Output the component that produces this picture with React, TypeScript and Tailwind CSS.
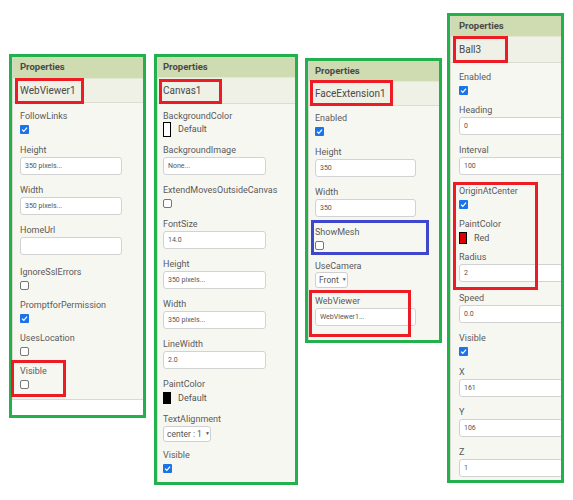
import React from "react";

type Item = {
  label: string;
  kind: "check" | "input" | "swatch" | "select";
  h?: number;
  value?: string;
  checked?: boolean;
  color?: string;
  tall?: boolean;
  selectCls?: string;
};

const H: Record<number, string> = {
  33: "h-[33px]",
  34: "h-[34px]",
  35: "h-[35px]",
  36: "h-[36px]",
  40: "h-[40px]",
  41: "h-[41px]",
  42: "h-[42px]",
};

function Check({ on }: { on?: boolean }) {
  if (on) {
    return (
      <div className="mt-[3px] w-[9px] h-[9px] rounded-[1px] bg-[#1a73e8] flex items-center justify-center">
        <svg width="7" height="7" viewBox="0 0 10 10">
          <path d="M1.5 5.2 L4 7.6 L8.6 2.4" fill="none" stroke="#fff" strokeWidth="1.8" />
        </svg>
      </div>
    );
  }
  return <div className="mt-[3px] w-[9px] h-[9px] rounded-[2px] border border-[#767676] bg-white" />;
}

function Prop({ item, inputCls }: { item: Item; inputCls: string }) {
  return (
    <div className={`flex flex-col items-start ${item.h ? H[item.h] : ""}`}>
      <div className="h-[12px] leading-[12px] text-[9px] text-[#5a5a5a] whitespace-nowrap">{item.label}</div>
      {item.kind === "check" && <Check on={item.checked} />}
      {item.kind === "input" && (
        <div className={`mt-[1px] h-[18px] shrink-0 bg-white border border-[#d2d2d2] rounded-[3px] flex items-center pl-[4px] text-[7px] text-[#555] ${inputCls}`}>
          {item.value}
        </div>
      )}
      {item.kind === "swatch" && (
        <div className={`flex items-center gap-[7px] ${item.tall ? "mt-0 h-[15px]" : "mt-[2px] h-[12px]"}`}>
          <div
            className={`${item.tall ? "w-[8px] h-[15px] border-[1.5px]" : "w-[8px] h-[12px] border"} border-black`}
            style={{ background: item.color }}
          />
          <span className="text-[9px] text-[#555] leading-none">{item.value}</span>
        </div>
      )}
      {item.kind === "select" && (
        <div className={`h-[16px] bg-white border border-[#cfcfcf] rounded-[3px] flex items-center pl-[3px] gap-[3px] text-[8.5px] text-[#555] ${item.selectCls}`}>
          <span>{item.value}</span>
          <span className="text-[5px]">▼</span>
        </div>
      )}
    </div>
  );
}

function Panel({
  name,
  items,
  panelCls,
  headCls,
  nameCls,
  bodyCls,
  inputCls,
}: {
  name: string;
  items: Item[];
  panelCls: string;
  headCls: string;
  nameCls: string;
  bodyCls: string;
  inputCls: string;
}) {
  return (
    <div className={`bg-[#f7f7f2] border-l border-[#d9d9d0] overflow-hidden ${panelCls}`}>
      <div className={`flex items-center bg-[#cfdbb0] border-b border-[#e3e8d2] text-[9.5px] font-bold text-[#4a4a4a] ${headCls}`}>
        Properties
      </div>
      <div className={`flex items-center bg-[#eff0e6] border-b border-[#dcdcd0] text-[10px] text-[#4a4a4a] ${nameCls}`}>
        {name}
      </div>
      <div className={`flex flex-col ${bodyCls}`}>
        {items.map((it) => (
          <Prop key={it.label} item={it} inputCls={inputCls} />
        ))}
      </div>
    </div>
  );
}

const red = "absolute border-[3px] border-[#ed1c24]";

export default function App() {
  const webViewer: Item[] = [
    { label: "FollowLinks", kind: "check", checked: true, h: 34 },
    { label: "Height", kind: "input", value: "350 pixels...", h: 40 },
    { label: "Width", kind: "input", value: "350 pixels...", h: 40 },
    { label: "HomeUrl", kind: "input", value: "", h: 42 },
    { label: "IgnoreSslErrors", kind: "check", h: 33 },
    { label: "PromptforPermission", kind: "check", checked: true, h: 33 },
    { label: "UsesLocation", kind: "check", h: 33 },
    { label: "Visible", kind: "check" },
  ];
  const canvas: Item[] = [
    { label: "BackgroundColor", kind: "swatch", value: "Default", color: "#fff", tall: true, h: 34 },
    { label: "BackgroundImage", kind: "input", value: "None...", h: 40 },
    { label: "ExtendMovesOutsideCanvas", kind: "check", h: 34 },
    { label: "FontSize", kind: "input", value: "14.0", h: 40 },
    { label: "Height", kind: "input", value: "350 pixels...", h: 40 },
    { label: "Width", kind: "input", value: "350 pixels...", h: 40 },
    { label: "LineWidth", kind: "input", value: "2.0", h: 40 },
    { label: "PaintColor", kind: "swatch", value: "Default", color: "#000", h: 35 },
    { label: "TextAlignment", kind: "select", value: "center : 1", selectCls: "w-[48px] mt-[1px]", h: 36 },
    { label: "Visible", kind: "check", checked: true },
  ];
  const face: Item[] = [
    { label: "Enabled", kind: "check", checked: true, h: 34 },
    { label: "Height", kind: "input", value: "350", h: 40 },
    { label: "Width", kind: "input", value: "350", h: 40 },
    { label: "ShowMesh", kind: "check", h: 34 },
    { label: "UseCamera", kind: "select", value: "Front", selectCls: "w-[33px] mt-0", h: 35 },
    { label: "WebViewer", kind: "input", value: "WebViewer1..." },
  ];
  const ball: Item[] = [
    { label: "Enabled", kind: "check", checked: true, h: 33 },
    { label: "Heading", kind: "input", value: "0", h: 40 },
    { label: "Interval", kind: "input", value: "100", h: 41 },
    { label: "OriginAtCenter", kind: "check", checked: true, h: 33 },
    { label: "PaintColor", kind: "swatch", value: "Red", color: "#e00000", h: 33 },
    { label: "Radius", kind: "input", value: "2", h: 41 },
    { label: "Speed", kind: "input", value: "0.0", h: 40 },
    { label: "Visible", kind: "check", checked: true, h: 34 },
    { label: "X", kind: "input", value: "161", h: 40 },
    { label: "Y", kind: "input", value: "106", h: 40 },
    { label: "Z", kind: "input", value: "1" },
  ];

  return (
    <div className="w-[573px] h-[500px] bg-white flex items-start overflow-hidden" style={{ fontFamily: "Roboto, 'Noto Sans', sans-serif" }}>
      {/* WebViewer */}
      <div className="relative shrink-0 w-[137px] h-[364px] mt-[54px] ml-[9px] border-[3px] border-[#22b14c] bg-white">
        <Panel
          name="WebViewer1"
          items={webViewer}
          panelCls="h-[343px] border-b"
          headCls="h-[22px] pl-[7px]"
          nameCls="h-[24px] pl-[7px]"
          bodyCls="pt-[7px] pl-[7px]"
          inputCls="w-[102px]"
        />
        <div className={`${red} left-[3px] top-[21px] w-[69px] h-[26px]`} />
        <div className={`${red} left-[-1px] top-[303px] w-[55px] h-[37px]`} />
      </div>

      {/* Canvas */}
      <div className="relative shrink-0 w-[144px] h-[431px] mt-[54px] ml-[8px] border-[3px] border-[#22b14c] bg-white">
        <Panel
          name="Canvas1"
          items={canvas}
          panelCls="h-full"
          headCls="h-[21px] pl-[5px]"
          nameCls="h-[26px] pl-[5px]"
          bodyCls="pt-[6px] pl-[5px]"
          inputCls="w-[103px]"
        />
        <div className={`${red} left-[2px] top-[22px] w-[63px] h-[25px]`} />
      </div>

      {/* FaceExtension */}
      <div className="relative shrink-0 w-[137px] h-[285px] mt-[58px] ml-[7px] border-[3px] border-[#22b14c] bg-white">
        <Panel
          name="FaceExtension1"
          items={face}
          panelCls="h-full"
          headCls="h-[21px] pl-[6px]"
          nameCls="h-[24px] pl-[6px]"
          bodyCls="pt-[6px] pl-[6px]"
          inputCls="w-[101px]"
        />
        <div className={`${red} left-[2px] top-[19px] w-[83px] h-[26px]`} />
        <div className="absolute border-[3px] border-[#3f48cc] left-[3px] top-[159px] w-[118px] h-[35px]" />
        <div className={`${red} left-[1px] top-[229px] w-[102px] h-[47px]`} />
      </div>

      {/* Ball */}
      <div className="relative shrink-0 w-[117px] h-[470px] mt-[13px] ml-[5px] border-[3px] border-[#22b14c] bg-white">
        <Panel
          name="Ball3"
          items={ball}
          panelCls="h-full"
          headCls="h-[21px] pl-[8px]"
          nameCls="h-[26px] pl-[8px]"
          bodyCls="pt-[8px] pl-[8px]"
          inputCls="w-[104px]"
        />
        <div className={`${red} left-[3px] top-[20px] w-[55px] h-[27px]`} />
        <div className={`${red} left-[3px] top-[166px] w-[85px] h-[108px]`} />
      </div>
    </div>
  );
}
